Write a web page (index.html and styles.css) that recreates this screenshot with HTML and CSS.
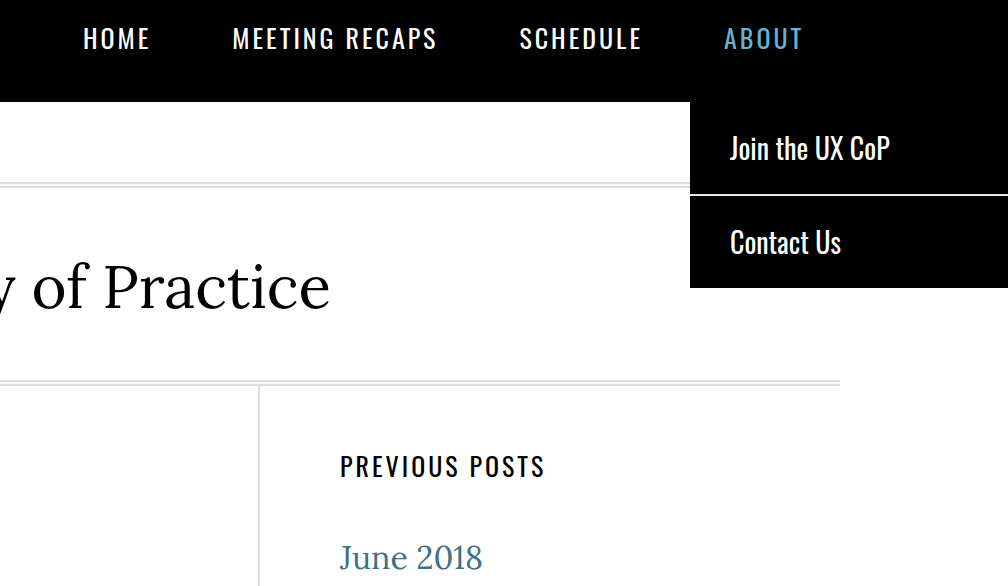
FILE: index.html
```html
<!DOCTYPE html>
<html lang="en">
<head>
<meta charset="utf-8">
<title>UX Community of Practice</title>
<link rel="stylesheet" href="styles.css">
</head>
<body>
<header class="site-header">
  <nav class="main-nav">
    <ul class="menu">
      <li class="menu-item"><a href="#">HOME</a></li>
      <li class="menu-item"><a href="#">MEETING RECAPS</a></li>
      <li class="menu-item"><a href="#">SCHEDULE</a></li>
      <li class="menu-item has-sub">
        <a href="#" class="is-current">ABOUT</a>
        <ul class="sub-menu">
          <li class="sub-item"><a href="#">Join the UX CoP</a></li>
          <li class="sub-item"><a href="#">Contact Us</a></li>
        </ul>
      </li>
    </ul>
  </nav>
</header>
<div class="branding"></div>
<div class="double-rule"></div>
<div class="title-area">
  <h1 class="site-title"><span>UX Community of Practice</span></h1>
</div>
<div class="double-rule double-rule--content"></div>
<div class="content">
  <main class="primary"></main>
  <aside class="sidebar">
    <h2 class="widget-title">PREVIOUS POSTS</h2>
    <ul class="archive-list">
      <li><a href="#">June 2018</a></li>
    </ul>
  </aside>
</div>
</body>
</html>
```
FILE: styles.css
```css
* { box-sizing: border-box; }
html, body { margin: 0; padding: 0; background: #fff; overflow: hidden; }
body { width: 1008px; height: 586px; }
a { text-decoration: none; color: inherit; }
ul { list-style: none; margin: 0; padding: 0; }

.site-header { background: #000; height: 102px; position: relative; z-index: 2; }
.menu { display: flex; padding-left: 49px; gap: 13px; height: 102px; }
.menu-item { position: relative; padding: 0 34px; }
.menu-item > a {
  display: block;
  font-family: "Oswald", "DejaVu Sans Condensed", "Liberation Sans Narrow", "Liberation Sans", sans-serif;
  font-size: 26px;
  line-height: 26px;
  letter-spacing: 3px;
  color: #fff;
  padding-top: 25px;
}
.menu-item > a.is-current { color: #62b3d3; }

.sub-menu {
  position: absolute;
  top: 102px;
  left: 0;
  width: 340px;
  background: #000;
}
.sub-item > a {
  display: block;
  height: 92px;
  padding: 32px 0 0 40px;
  font-family: "Oswald", "DejaVu Sans Condensed", "Liberation Sans Narrow", "Liberation Sans", sans-serif;
  font-size: 28px;
  line-height: 28px;
  color: #fff;
}
.sub-item + .sub-item > a { border-top: 2px solid #e6e6e6; height: 94px; }

.branding { height: 80px; }
.double-rule { height: 6px; border-top: 2px solid #dcdcdc; border-bottom: 2px solid #dcdcdc; }
.double-rule--content { width: 840px; }

.title-area { height: 192px; display: flex; }
.site-title {
  margin: 0;
  width: 331px;
  display: flex;
  justify-content: flex-end;
  white-space: nowrap;
  font-family: "Lora", "Liberation Serif", serif;
  font-weight: 400;
  font-size: 60px;
  line-height: 60px;
  padding-top: 68px;
  color: #000;
}

.content { display: flex; height: 200px; }
.primary { width: 258px; }
.sidebar { border-left: 2px solid #dcdcdc; padding: 66px 0 0 80px; flex: 1; }
.widget-title {
  margin: 0;
  font-family: "Oswald", "DejaVu Sans Condensed", "Liberation Sans Narrow", "Liberation Sans", sans-serif;
  font-weight: 400;
  font-size: 26px;
  line-height: 28px;
  letter-spacing: 3px;
  color: #000;
}
.archive-list { margin-top: 60px; }
.archive-list a {
  font-family: "Lora", "Liberation Serif", serif;
  font-size: 32px;
  line-height: 36px;
  color: #3e7186;
}
```
